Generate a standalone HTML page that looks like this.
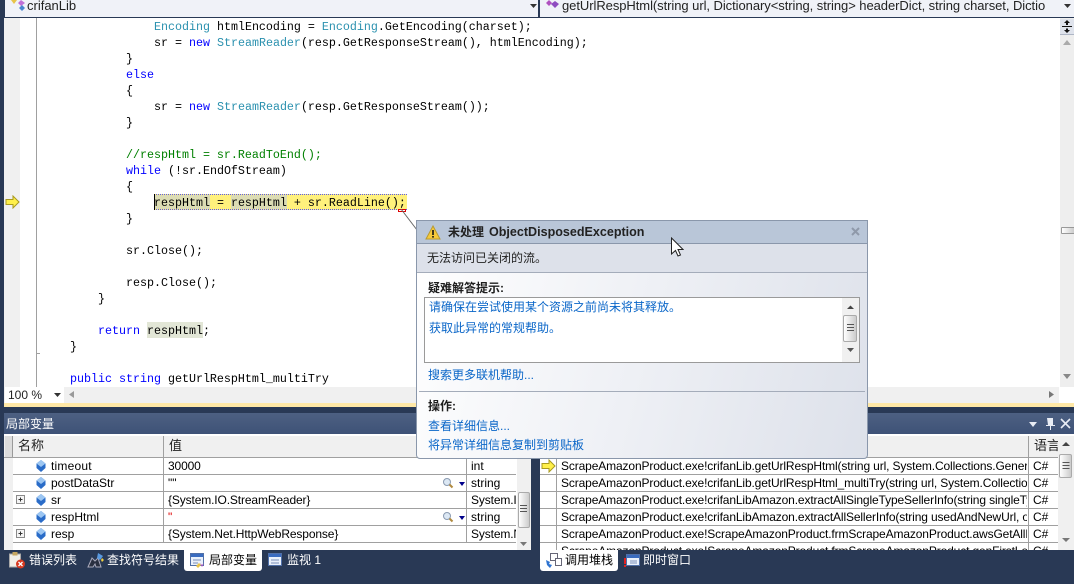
<!DOCTYPE html>
<html><head><meta charset="utf-8"><style>
html,body{margin:0;padding:0}
body{width:1074px;height:584px;overflow:hidden;position:relative;background:#293955;font-family:"Liberation Sans","Noto Sans CJK SC",sans-serif;font-size:12px;color:#000}
div,span.a{position:absolute;white-space:pre}
.c{font-family:"Liberation Mono",monospace;font-size:11.67px;line-height:16px;height:16px;color:#000;margin-top:1px}
.k{color:#00f}.t{color:#2b91af}.g{color:#008000}
.h{left:0;height:1px;background:#a0a0a0}
.v{width:1px;background:#a0a0a0}
.u{line-height:16px;height:16px}
.n{letter-spacing:-.13px}
.l{color:#0a66c8;line-height:16px;height:16px}
.w{color:#fff;line-height:18px;height:18px;font-size:12px}
.b{color:#1e1e1e;font-weight:bold;line-height:16px;height:16px}
</style></head><body>
<!-- top combos -->
<div style="left:0;top:0;width:1074px;height:18px;background:#293955"></div>
<div style="left:5px;top:0;width:533px;height:17px;background:#f0f2f8"></div>
<div style="left:540px;top:0;width:534px;height:17px;background:#f0f2f8"></div>
<div style="left:27px;top:-2px;font-size:13px;line-height:16px;color:#222">crifanLib</div>
<div style="left:562px;top:-2px;font-size:13px;line-height:16px;color:#222;letter-spacing:-.06px">getUrlRespHtml(string url, Dictionary&lt;string, string&gt; headerDict, string charset, Dictio</div>
<svg style="position:absolute;left:9px;top:0" width="18" height="14"><path d="M2 0h6l-3 4z" fill="#e8c44a"/><path d="M12 0l4 3-4 3-3-3z" fill="#c070d8"/><path d="M13 5l3 3-3 3-3-3z" fill="#4a86d0"/></svg>
<svg style="position:absolute;left:546px;top:0" width="16" height="14"><path d="M3 0l3 3-3 3-3-3z" fill="#b050c0"/><path d="M9 1l4 3-4 4-4-4z" fill="#8e4cc0"/></svg>
<svg style="position:absolute;left:530px;top:3px" width="8" height="6"><path d="M0 1h7l-3.500 4z" fill="#333"/></svg>
<svg style="position:absolute;left:1064px;top:3px" width="8" height="6"><path d="M0 1h7l-3.500 4z" fill="#333"/></svg>
<!-- editor -->
<div style="left:4px;top:18px;width:1056px;height:369px;background:#fff"></div>
<div style="left:4px;top:18px;width:16px;height:369px;background:#f0f0f0"></div>
<div class="v" style="left:36px;top:18px;height:369px"></div>
<div style="left:36px;top:353px;width:4px;height:1px;background:#a0a0a0"></div>
<div style="left:1060px;top:18px;width:14px;height:369px;background:#eeeeee"></div>
<div style="left:1060px;top:19px;width:14px;height:15px;background:#dfe3ec;border-bottom:1px solid #aeb6c6"></div>
<svg style="position:absolute;left:1060px;top:19px" width="14" height="16"><path d="M7 1l3 3H8v2H6V4H4zM2 7h10v1H2zM7 14l3-3H8V9.500H6V11H4z" fill="#111"/></svg>
<svg style="position:absolute;left:1062px;top:39px" width="10" height="8"><path d="M1 6L5 1l4 5z" fill="#aaa"/></svg>
<svg style="position:absolute;left:1062px;top:372px" width="10" height="8"><path d="M1 2h8L5 7z" fill="#888"/></svg>
<div style="left:1061px;top:227px;width:12px;height:5px;background:linear-gradient(90deg,#fff,#ccc);border:1px solid #999;border-radius:1px"></div>

<div class="c" style="left:154px;top:18px"><span class="t">Encoding</span> htmlEncoding = <span class="t">Encoding</span>.GetEncoding(charset);</div>
<div class="c" style="left:154px;top:34px">sr = <span class="k">new</span> <span class="t">StreamReader</span>(resp.GetResponseStream(), htmlEncoding);</div>
<div class="c" style="left:126px;top:50px">}</div>
<div class="c k" style="left:126px;top:66px">else</div>
<div class="c" style="left:126px;top:82px">{</div>
<div class="c" style="left:154px;top:98px">sr = <span class="k">new</span> <span class="t">StreamReader</span>(resp.GetResponseStream());</div>
<div class="c" style="left:126px;top:114px">}</div>
<div class="c g" style="left:126px;top:146px">//respHtml = sr.ReadToEnd();</div>
<div class="c" style="left:126px;top:162px"><span class="k">while</span> (!sr.EndOfStream)</div>
<div class="c" style="left:126px;top:178px">{</div>
<div style="left:154px;top:194px;width:253px;height:16px;background:#fff17c;border-top:1px dotted #5a5af0;border-bottom:1px dotted #5a5af0;box-sizing:border-box"></div>
<div style="left:154px;top:195px;width:56px;height:14px;background:#dcdcb4"></div>
<div style="left:231px;top:195px;width:56px;height:14px;background:#dcdcb4"></div>
<div style="left:154px;top:194px;width:1px;height:16px;background:#000"></div>
<div class="c" style="left:154px;top:194px">respHtml = respHtml + sr.ReadLine();</div>
<div style="left:398px;top:209px;width:8px;height:3px;border:1px solid #e00000;box-sizing:border-box"></div>
<div class="c" style="left:126px;top:210px">}</div>
<div class="c" style="left:126px;top:242px">sr.Close();</div>
<div class="c" style="left:126px;top:274px">resp.Close();</div>
<div class="c" style="left:98px;top:290px">}</div>
<div style="left:147px;top:322px;width:56px;height:16px;background:#e2e6d6"></div>
<div class="c" style="left:98px;top:322px"><span class="k">return</span> respHtml;</div>
<div class="c" style="left:70px;top:338px">}</div>
<div class="c" style="left:70px;top:370px"><span class="k">public</span> <span class="k">string</span> getUrlRespHtml_multiTry</div>
<svg style="position:absolute;left:5px;top:195px" width="16" height="14"><path d="M1 4.500h7V1l6 6-6 6V9.500H1z" fill="#fff04a" stroke="#a89a20"/></svg>
<!-- hscroll -->
<div style="left:4px;top:387px;width:1055px;height:16px;background:#f0f0f0"></div>
<div style="left:1059px;top:387px;width:15px;height:16px;background:#fff"></div>
<div style="left:5px;top:387px;width:59px;height:16px;background:#fff"></div>
<div style="left:8px;top:387px;line-height:16px;color:#222">100 %</div>
<svg style="position:absolute;left:54px;top:392px" width="8" height="6"><path d="M0 1h7l-3.500 4z" fill="#333"/></svg>
<svg style="position:absolute;left:68px;top:390px" width="7" height="10"><path d="M6 1v7L1 4.500z" fill="#999"/></svg>
<svg style="position:absolute;left:1048px;top:390px" width="7" height="10"><path d="M1 1v7l5-3.500z" fill="#777"/></svg>
<div style="left:4px;top:403px;width:1070px;height:4px;background:#ffe8a6"></div>
<!-- panel title -->
<div style="left:4px;top:413px;width:1070px;height:21px;background:linear-gradient(#4d6082,#3e5277)"></div>
<div class="w" style="left:6px;top:415px">局部变量</div>
<svg style="position:absolute;left:1028px;top:417px" width="46" height="14"><path d="M1 5h8L5 10z" fill="#e8ecf4"/><path d="M19 1h6v7h2v1h-4v4h-1V9h-4V8h2z" fill="#e8ecf4"/><path d="M33 2l9 9M42 2l-9 9" stroke="#e8ecf4" stroke-width="1.600"/></svg>
<!-- left table -->
<div style="left:4px;top:434px;width:527px;height:116px;background:#fff"></div>
<div style="left:4px;top:436px;width:527px;height:21px;background:#f0f0f0"></div>
<div style="left:4px;top:457px;width:9px;height:93px;background:#f0f0f0"></div>
<div style="left:5px;top:436px;width:8px;height:21px;background:#dcdcdc;border-right:1px solid #999;box-sizing:border-box"></div>
<div class="h" style="left:4px;top:457px;width:513px"></div>
<div class="h" style="left:13px;top:474px;width:503px"></div>
<div class="h" style="left:13px;top:491px;width:503px"></div>
<div class="h" style="left:13px;top:508px;width:503px"></div>
<div class="h" style="left:13px;top:525px;width:503px"></div>
<div class="h" style="left:13px;top:542px;width:503px"></div>
<div class="v" style="left:163px;top:436px;height:107px"></div>
<div class="v" style="left:466px;top:457px;height:86px"></div>
<div class="u" style="left:18px;top:438px;font-size:13px;color:#222">名称</div>
<div class="u" style="left:169px;top:438px;font-size:13px;color:#222">值</div>
<div class="u" style="left:51px;top:458px;letter-spacing:.2px">timeout</div><div class="u n" style="left:168px;top:458px">30000</div><div class="u" style="left:471px;top:458px">int</div>
<div class="u" style="left:51px;top:475px">postDataStr</div><div class="u" style="left:168px;top:475px">""</div><div class="u" style="left:471px;top:475px">string</div>
<div class="u" style="left:51px;top:492px">sr</div><div class="u n" style="left:168px;top:492px">{System.IO.StreamReader}</div><div class="u n" style="left:471px;top:492px;width:45px;overflow:hidden">System.IO</div>
<div class="u" style="left:51px;top:509px">respHtml</div><div class="u" style="left:168px;top:509px;color:#e00000">"</div><div class="u" style="left:471px;top:509px">string</div>
<div class="u" style="left:51px;top:526px">resp</div><div class="u n" style="left:168px;top:526px">{System.Net.HttpWebResponse}</div><div class="u n" style="left:471px;top:526px;width:45px;overflow:hidden">System.Net</div>
<svg style="position:absolute;left:14px;top:458px" width="36" height="88">
<path d="M27 2l4.500 3.500v4.500L27 14l-4.500-4V5.500z" fill="#2a6cc8"/><path d="M27 2l4.500 3.500L27 9l-4.500-3.500z" fill="#9cc6f2"/>
<path d="M27 19l4.500 3.500v4.500L27 31l-4.500-4v-4.500z" fill="#2a6cc8"/><path d="M27 19l4.500 3.500L27 26l-4.500-3.500z" fill="#9cc6f2"/>
<path d="M27 36l4.500 3.500v4.500L27 48l-4.500-4v-4.500z" fill="#2a6cc8"/><path d="M27 36l4.500 3.500L27 43l-4.500-3.500z" fill="#9cc6f2"/>
<path d="M27 53l4.500 3.500v4.500L27 65l-4.500-4v-4.500z" fill="#2a6cc8"/><path d="M27 53l4.500 3.500L27 60l-4.500-3.500z" fill="#9cc6f2"/>
<path d="M27 70l4.500 3.500v4.500L27 82l-4.500-4v-4.500z" fill="#2a6cc8"/><path d="M27 70l4.500 3.500L27 77l-4.500-3.500z" fill="#9cc6f2"/>
<rect x="2.500" y="37.500" width="8" height="8" fill="#f4f4f4" stroke="#8a8a8a"/><path d="M4.500 41.500h4M6.500 39.500v4" stroke="#333"/>
<rect x="2.500" y="71.500" width="8" height="8" fill="#f4f4f4" stroke="#8a8a8a"/><path d="M4.500 75.500h4M6.500 73.500v4" stroke="#333"/>
</svg>
<svg style="position:absolute;left:441px;top:476px" width="24" height="50">
<circle cx="6" cy="6" r="3.500" fill="#dce8f4" stroke="#8a9ab0"/><path d="M8.500 8.500l3 3" stroke="#b08a40" stroke-width="2"/><path d="M18 6h6l-3 4z" fill="#00008a"/>
<circle cx="6" cy="40" r="3.500" fill="#dce8f4" stroke="#8a9ab0"/><path d="M8.500 42.500l3 3" stroke="#b08a40" stroke-width="2"/><path d="M18 40h6l-3 4z" fill="#00008a"/>
</svg>
<div style="left:517px;top:457px;width:14px;height:93px;background:#f0f0f0"></div>
<div style="left:518px;top:492px;width:12px;height:36px;background:linear-gradient(90deg,#fff,#ccc);border:1px solid #aaa;box-sizing:border-box;border-radius:2px"></div>
<svg style="position:absolute;left:520px;top:505px" width="8" height="42"><path d="M0 .5h7M0 3.500h7M0 6.500h7" stroke="#555"/><path d="M0 37h7l-3.500 4z" fill="#777"/></svg>
<!-- right table -->
<div style="left:540px;top:434px;width:534px;height:116px;background:#fff"></div>
<div style="left:540px;top:436px;width:534px;height:21px;background:#f0f0f0"></div>
<div class="h" style="left:540px;top:457px;width:518px"></div>
<div class="h" style="left:540px;top:474px;width:518px"></div>
<div class="h" style="left:540px;top:491px;width:518px"></div>
<div class="h" style="left:540px;top:508px;width:518px"></div>
<div class="h" style="left:540px;top:525px;width:518px"></div>
<div class="h" style="left:540px;top:542px;width:518px"></div>
<div class="v" style="left:556px;top:457px;height:93px"></div>
<div class="v" style="left:1028px;top:436px;height:114px"></div>
<div class="u" style="left:1034px;top:438px;font-size:13px;color:#222">语言</div>
<div class="u n" style="left:561px;top:458px;width:466px;overflow:hidden">ScrapeAmazonProduct.exe!crifanLib.getUrlRespHtml(string url, System.Collections.Generic.Dict</div>
<div class="u n" style="left:561px;top:475px;width:466px;overflow:hidden">ScrapeAmazonProduct.exe!crifanLib.getUrlRespHtml_multiTry(string url, System.Collections.Gen</div>
<div class="u n" style="left:561px;top:492px;width:466px;overflow:hidden">ScrapeAmazonProduct.exe!crifanLibAmazon.extractAllSingleTypeSellerInfo(string singleTypeUrl</div>
<div class="u n" style="left:561px;top:509px;width:466px;overflow:hidden">ScrapeAmazonProduct.exe!crifanLibAmazon.extractAllSellerInfo(string usedAndNewUrl, out List</div>
<div class="u n" style="left:561px;top:526px;width:466px;overflow:hidden">ScrapeAmazonProduct.exe!ScrapeAmazonProduct.frmScrapeAmazonProduct.awsGetAllProductInfo</div>
<div class="n" style="left:561px;top:543px;width:466px;height:7px;overflow:hidden;line-height:16px">ScrapeAmazonProduct.exe!ScrapeAmazonProduct.frmScrapeAmazonProduct.genFirstLevel</div>
<div class="u" style="left:1033px;top:458px">C#</div><div class="u" style="left:1033px;top:475px">C#</div><div class="u" style="left:1033px;top:492px">C#</div><div class="u" style="left:1033px;top:509px">C#</div><div class="u" style="left:1033px;top:526px">C#</div>
<div style="left:1033px;top:543px;height:7px;overflow:hidden;line-height:16px">C#</div>
<svg style="position:absolute;left:541px;top:459px" width="15" height="14"><path d="M1 4.500h7V1l6 6-6 6V9.500H1z" fill="#fff04a" stroke="#a89a20"/></svg>
<div style="left:1058px;top:436px;width:16px;height:114px;background:#f0f0f0"></div>
<div style="left:1059px;top:454px;width:13px;height:24px;background:linear-gradient(90deg,#fff,#ccc);border:1px solid #aaa;box-sizing:border-box;border-radius:2px"></div>
<svg style="position:absolute;left:1061px;top:440px" width="10" height="104"><path d="M1 6l4-4 4 4z" fill="#444"/><path d="M1.500 22.500h7M1.500 25.500h7M1.500 28.500h7" stroke="#555"/><path d="M1 98h8l-4 4z" fill="#777"/></svg>
<!-- bottom tabs -->
<div style="left:184px;top:550px;width:78px;height:21px;background:#fff;border-radius:0 0 3px 3px"></div>
<div style="left:540px;top:550px;width:78px;height:21px;background:#fff;border-radius:0 0 3px 3px"></div>
<div class="w" style="left:29px;top:551px">错误列表</div>
<div class="w" style="left:107px;top:551px">查找符号结果</div>
<div class="w" style="left:209px;top:551px;color:#000">局部变量</div>
<div class="w" style="left:287px;top:551px">监视 1</div>
<div class="w" style="left:565px;top:551px;color:#000">调用堆栈</div>
<div class="w" style="left:643px;top:551px">即时窗口</div>
<svg style="position:absolute;left:8px;top:551px" width="18" height="18"><rect x="1.500" y="3" width="11" height="13" fill="#f2f0e8" stroke="#a8a8a8"/><rect x="4.500" y="1" width="5" height="3.500" fill="#c8a860"/><circle cx="12.500" cy="13" r="4.500" fill="#d83a20"/><path d="M10.500 11l4 4M14.500 11l-4 4" stroke="#fff" stroke-width="1.300"/></svg>
<svg style="position:absolute;left:87px;top:552px" width="18" height="17"><path d="M1 15l4-9 3 3 3-3 3 9H9l-1-3-2 3z" fill="#2a3040" stroke="#aab"/><path d="M11 1l5 3-3 4-3-2z" fill="#5a9ae0"/><path d="M15 6l2 2-2 2-1-2z" fill="#f0d040"/></svg>
<svg style="position:absolute;left:189px;top:552px" width="18" height="17"><rect x="1.500" y="1.500" width="13" height="12" fill="#eaf1fb" stroke="#5070a8"/><rect x="2" y="2" width="12" height="3" fill="#3a6cc0"/><path d="M4 8h8M4 11h5" stroke="#7a90b8"/><path d="M7 14l3-3 2 2-3 3z" fill="#e8c44a"/><path d="M11 11l2 2 2-2-2 4z" fill="#b050c0"/></svg>
<svg style="position:absolute;left:267px;top:552px" width="18" height="17"><rect x="1.500" y="1.500" width="13" height="12" fill="#eaf1fb" stroke="#5070a8"/><rect x="2" y="2" width="12" height="3" fill="#3a6cc0"/><path d="M4 8h8M4 11h8" stroke="#7a90b8"/></svg>
<svg style="position:absolute;left:545px;top:552px" width="18" height="17"><rect x="5.500" y="1.500" width="7" height="7" fill="#fff" stroke="#667"/><rect x="10.500" y="6.500" width="6" height="7" fill="#fff" stroke="#667"/><path d="M1 8l4 2-1 2 3 1-2 3-3-3z" fill="#2f74d0"/></svg>
<svg style="position:absolute;left:623px;top:552px" width="18" height="17"><rect x="3.500" y="2.500" width="13" height="11" fill="#eaf1fb" stroke="#5070a8"/><rect x="4" y="3" width="12" height="3" fill="#3a6cc0"/><path d="M7 9h7M7 11h7" stroke="#7a90b8"/><path d="M1 6h2v6H1zM1 13h2v2H1z" fill="#e02020"/></svg>
<!-- popup -->
<svg style="position:absolute;left:400px;top:208px" width="20" height="26"><path d="M1 1l16 21" stroke="#666"/></svg>
<div style="left:416px;top:220px;width:452px;height:239px;box-sizing:border-box;border:1px solid #8a97ab;border-radius:0 0 4px 4px;background:linear-gradient(105deg,#ffffff 0%,#eef0f5 50%,#dde1ea 100%)"></div>
<div style="left:417px;top:221px;width:450px;height:23px;background:#b9c6d8;border-bottom:1px solid #8a97ab;box-sizing:border-box"></div>
<div style="left:417px;top:244px;width:450px;height:29px;background:#dde1ea;border-bottom:1px solid #a4acba;box-sizing:border-box"></div>
<svg style="position:absolute;left:425px;top:225px" width="16" height="15"><path d="M8 1l7 13H1z" fill="#f6c93a" stroke="#b89a30"/><path d="M7.200 5h1.600v5H7.200zM7.200 11h1.600v1.600H7.200z" fill="#111"/></svg>
<div style="left:448px;top:224px;font-size:12px;line-height:17px;font-weight:bold;color:#222">未处理</div>
<div style="left:489px;top:224px;font-size:12.55px;line-height:17px;font-weight:bold;color:#222">ObjectDisposedException</div>
<svg style="position:absolute;left:851px;top:227px" width="10" height="10"><path d="M1 1l7 7M8 1L1 8" stroke="#8f99aa" stroke-width="2"/></svg>
<div class="u" style="left:427px;top:250px;color:#222">无法访问已关闭的流。</div>
<div class="b" style="left:428px;top:280px">疑难解答提示:</div>
<div style="left:424px;top:297px;width:436px;height:66px;background:#fff;border:1px solid #9a9a9a;box-sizing:border-box"></div>
<div class="l" style="left:429px;top:299px">请确保在尝试使用某个资源之前尚未将其释放。</div>
<div class="l" style="left:429px;top:320px">获取此异常的常规帮助。</div>
<div style="left:842px;top:298px;width:17px;height:64px;background:#f0f0f0"></div>
<div style="left:843px;top:315px;width:14px;height:27px;background:linear-gradient(90deg,#fff,#ccc);border:1px solid #aaa;box-sizing:border-box;border-radius:2px"></div>
<svg style="position:absolute;left:846px;top:303px" width="10" height="54"><path d="M1 6l3.500-3.500L8 6z" fill="#444"/><path d="M1 21.500h7M1 24.500h7M1 27.500h7" stroke="#555"/><path d="M1 45h7l-3.500 4z" fill="#555"/></svg>
<div class="l" style="left:428px;top:367px">搜索更多联机帮助...</div>
<div style="left:419px;top:391px;width:446px;height:1px;background:#a4acba"></div>
<div class="b" style="left:428px;top:398px">操作:</div>
<div class="l" style="left:428px;top:418px">查看详细信息...</div>
<div class="l" style="left:428px;top:437px">将异常详细信息复制到剪贴板</div>
<svg style="position:absolute;left:670px;top:237px" width="14" height="22"><path d="M1.500 1v16l4-3.500 2.500 5.500 2.500-1-2.500-5.500h5z" fill="#fff" stroke="#222"/></svg>
</body></html>
